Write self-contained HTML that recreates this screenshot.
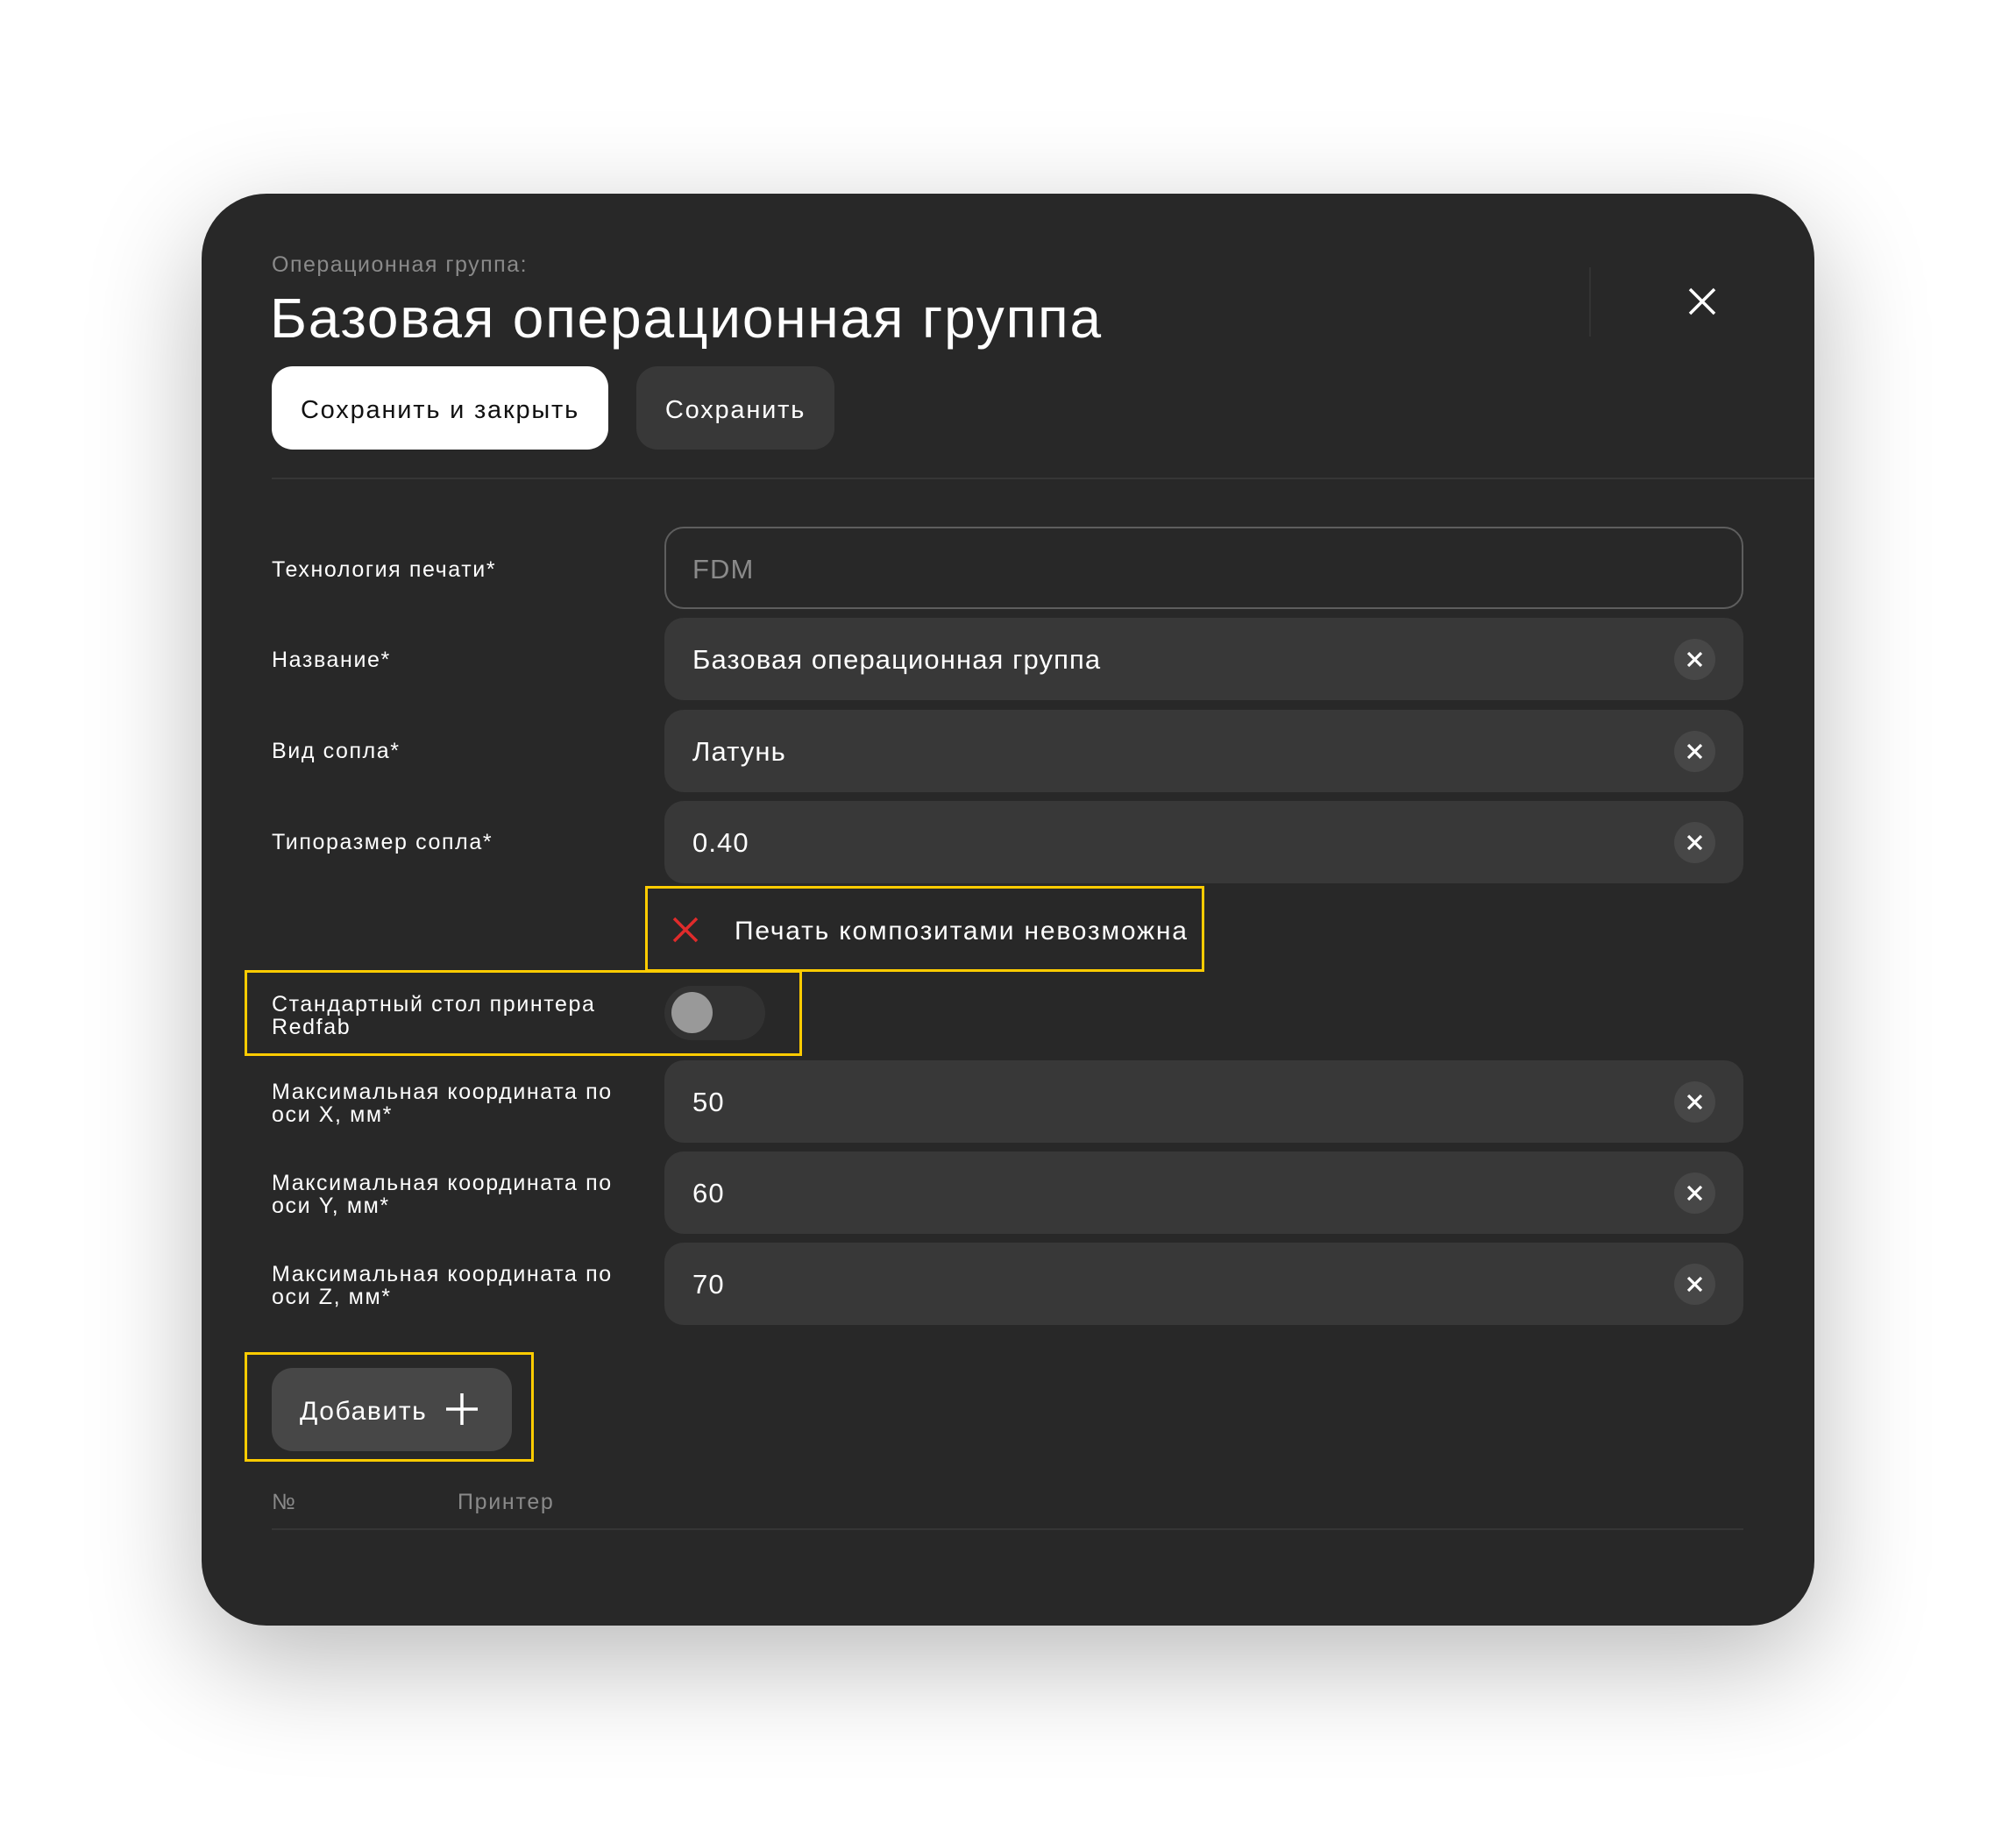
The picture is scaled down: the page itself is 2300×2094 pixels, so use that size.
<!DOCTYPE html>
<html><head><meta charset="utf-8"><style>
*{margin:0;padding:0;box-sizing:border-box}
body{width:2300px;height:2094px;background:#fff;font-family:"Liberation Sans",sans-serif;position:relative;overflow:hidden}
.card{position:absolute;left:230px;top:221px;width:1840px;height:1634px;background:#282828;border-radius:74px;box-shadow:0 40px 140px rgba(0,0,0,.28)}
.a{position:absolute}
.lbl{position:absolute;left:310px;color:#fff;font-size:25px;line-height:26px;letter-spacing:1.6px}
.inp{position:absolute;left:758px;width:1231px;height:94px;background:#383838;border-radius:22px;color:#fff;font-size:31px;line-height:96px;padding-left:32px;letter-spacing:1.1px}
.clr{position:absolute;right:32px;top:24px;width:47px;height:47px;border-radius:50%;background:#474747}
.clr svg{position:absolute;left:13px;top:13px}
.yb{position:absolute;border:3px solid #fc0}
</style></head><body>
<div class="card"></div>
<div class="a" style="left:310px;top:288px;color:#8a8a8a;font-size:25px;letter-spacing:1.5px">Операционная группа:</div>
<div class="a" style="left:308px;top:325px;color:#fff;font-size:64px;line-height:76px;letter-spacing:1.8px">Базовая операционная группа</div>
<div class="a" style="left:1813px;top:305px;width:2px;height:79px;background:#333"></div>
<svg class="a" style="left:1926px;top:328px" width="32" height="32" viewBox="0 0 32 32"><path d="M2 2L30 30M30 2L2 30" stroke="#fff" stroke-width="3.5"/></svg>
<div class="a" style="left:310px;top:418px;width:384px;height:95px;background:#fff;border-radius:24px;color:#111;font-size:29px;line-height:100px;text-align:center;letter-spacing:1.8px">Сохранить и закрыть</div>
<div class="a" style="left:726px;top:418px;width:226px;height:95px;background:#383838;border-radius:24px;color:#fff;font-size:29px;line-height:100px;text-align:center;letter-spacing:1.8px">Сохранить</div>
<div class="a" style="left:310px;top:545px;width:1760px;height:2px;background:#363636"></div>

<div class="lbl" style="top:637px">Технология печати*</div>
<div class="inp" style="top:601px;background:#282828;border:2px solid #5e5e5e;color:#8a8a8a;line-height:94px;padding-left:30px">FDM</div>
<div class="lbl" style="top:740px">Название*</div>
<div class="inp" style="top:705px">Базовая операционная группа<div class="clr"><svg width="21" height="21"><path d="M3 3L18 18M18 3L3 18" stroke="#fff" stroke-width="3.2"/></svg></div></div>
<div class="lbl" style="top:844px">Вид сопла*</div>
<div class="inp" style="top:810px">Латунь<div class="clr"><svg width="21" height="21"><path d="M3 3L18 18M18 3L3 18" stroke="#fff" stroke-width="3.2"/></svg></div></div>
<div class="lbl" style="top:948px">Типоразмер сопла*</div>
<div class="inp" style="top:914px">0.40<div class="clr"><svg width="21" height="21"><path d="M3 3L18 18M18 3L3 18" stroke="#fff" stroke-width="3.2"/></svg></div></div>

<div class="yb" style="left:736px;top:1011px;width:638px;height:98px"></div>
<svg class="a" style="left:767px;top:1046px" width="30" height="30"><path d="M2 2L28 28M28 2L2 28" stroke="#e02b2b" stroke-width="3.5"/></svg>
<div class="a" style="left:838px;top:1046px;color:#fff;font-size:30px;letter-spacing:1.8px">Печать композитами невозможна</div>

<div class="yb" style="left:279px;top:1107px;width:636px;height:98px"></div>
<div class="lbl" style="top:1133px">Стандартный стол принтера<br>Redfab</div>
<div class="a" style="left:758px;top:1125px;width:115px;height:62px;border-radius:31px;background:#323232"></div>
<div class="a" style="left:766px;top:1132px;width:47px;height:47px;border-radius:50%;background:#999"></div>

<div class="lbl" style="top:1233px">Максимальная координата по<br>оси X, мм*</div>
<div class="inp" style="top:1210px">50<div class="clr"><svg width="21" height="21"><path d="M3 3L18 18M18 3L3 18" stroke="#fff" stroke-width="3.2"/></svg></div></div>
<div class="lbl" style="top:1337px">Максимальная координата по<br>оси Y, мм*</div>
<div class="inp" style="top:1314px">60<div class="clr"><svg width="21" height="21"><path d="M3 3L18 18M18 3L3 18" stroke="#fff" stroke-width="3.2"/></svg></div></div>
<div class="lbl" style="top:1441px">Максимальная координата по<br>оси Z, мм*</div>
<div class="inp" style="top:1418px">70<div class="clr"><svg width="21" height="21"><path d="M3 3L18 18M18 3L3 18" stroke="#fff" stroke-width="3.2"/></svg></div></div>

<div class="yb" style="left:279px;top:1543px;width:330px;height:125px"></div>
<div class="a" style="left:310px;top:1561px;width:274px;height:95px;background:#474747;border-radius:24px;color:#fff;font-size:30px;line-height:100px;padding-left:32px;letter-spacing:1.6px">Добавить</div>
<svg class="a" style="left:508px;top:1589px" width="38" height="38"><path d="M19 1V37M1 19H37" stroke="#fff" stroke-width="3.5"/></svg>

<div class="a" style="left:310px;top:1700px;color:#8a8a8a;font-size:25px">№</div>
<div class="a" style="left:522px;top:1700px;color:#8a8a8a;font-size:25px;letter-spacing:1.7px">Принтер</div>
<div class="a" style="left:310px;top:1744px;width:1679px;height:2px;background:#363636"></div>
</body></html>
